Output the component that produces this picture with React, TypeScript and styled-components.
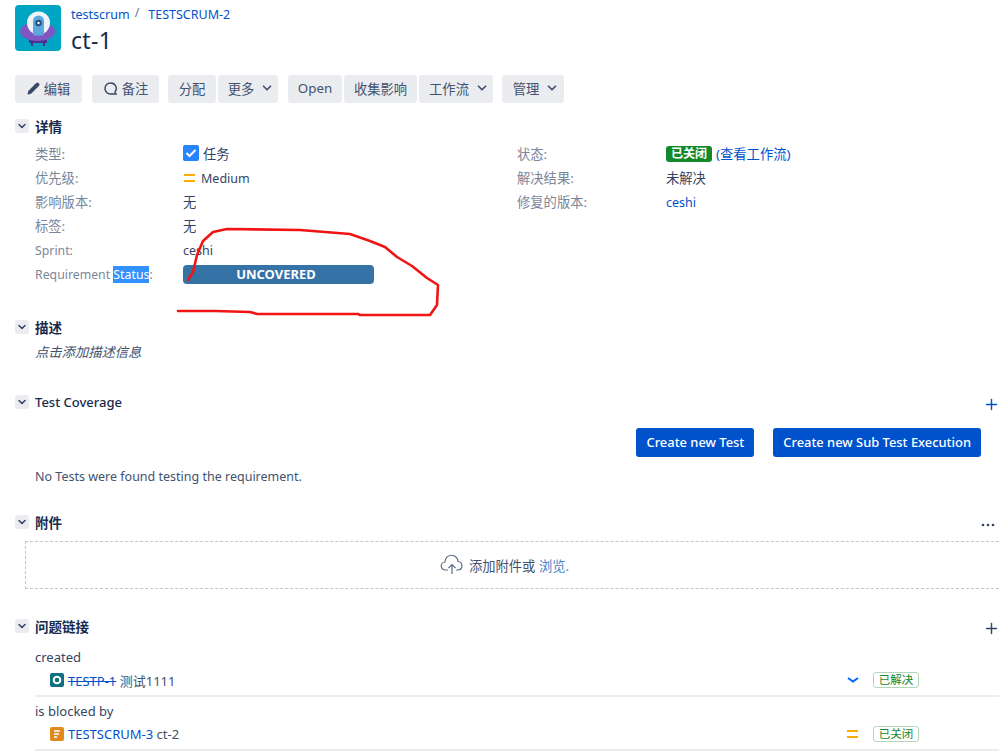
import styled, { createGlobalStyle } from "styled-components";
import { ChevronDown, Pencil, Plus } from "lucide-react";

const GlobalStyle = createGlobalStyle`
  html, body {
    margin: 0;
    padding: 0;
    background: #fff;
  }
  body {
    font-family: "Noto Sans", "Noto Sans CJK SC", sans-serif;
    font-size: 13px;
    color: #172b4d;
    overflow: hidden;
  }
`;

const Page = styled.div`
  position: relative;
  width: 999px;
  height: 755px;
  overflow: hidden;
  padding: 5px 0 0 15px;
  box-sizing: border-box;
`;
const Header = styled.header`
  display: flex;
  gap: 10px;
  height: 46px;
`;
const HeaderText = styled.div`
  display: flex;
  flex-direction: column;
`;
const Breadcrumbs = styled.div`
  display: flex;
  height: 20px;
  line-height: 20px;
  font-size: 12.5px;
  color: #6b778c;
`;
const Crumb = styled.a`
  color: #0052cc;
`;
const Slash = styled.span`
  margin: -2px 9px 0 5px;
`;
const Title = styled.h1`
  margin: 0;
  font-size: 23px;
  line-height: 30px;
  font-weight: 400;
  letter-spacing: 0.3px;
`;
const Toolbar = styled.div`
  display: flex;
  margin-top: 24px;
  height: 28px;
`;
const ToolButton = styled.button<{ $w: number; $after?: number; $caret?: boolean }>`
  display: flex;
  align-items: center;
  justify-content: center;
  gap: 4px;
  width: ${(p) => p.$w}px;
  height: 28px;
  margin-right: ${(p) => p.$after ?? 2}px;
  padding: 0 0 2px ${(p) => (p.$caret ? "6px" : "0")};
  border: 0;
  border-radius: 3px;
  background: #ebecf0;
  color: #42526e;
  font: inherit;
  font-size: 13.3px;
`;
const CaretSlot = styled.span`
  display: flex;
  margin-left: 2px;
`;
const Section = styled.section<{ $top: number }>`
  margin-top: ${(p) => p.$top}px;
`;
const SectionHead = styled.div`
  display: flex;
  align-items: center;
  height: 20px;
  justify-content: space-between;
`;
const HeadLeft = styled.div`
  display: flex;
  align-items: center;
  gap: 6px;
`;
const Toggle = styled.span`
  display: flex;
  align-items: center;
  justify-content: center;
  width: 14px;
  height: 14px;
  border-radius: 3px;
  background: #ebecf0;
  color: #344563;
`;
const SectionTitle = styled.h4<{ $latin?: boolean }>`
  margin: 0;
  font-size: ${(p) => (p.$latin ? "13px" : "13.5px")};
  font-weight: ${(p) => (p.$latin ? 500 : 700)};
  color: #172b4d;
`;
const DetailGrid = styled.div`
  display: grid;
  grid-template-columns: 482px 1fr;
  padding: 5px 0 0 20px;
`;
const DetailRow = styled.div`
  display: flex;
  align-items: center;
  height: 24px;
`;
const Label = styled.span<{ $latin?: boolean; $w?: number }>`
  width: ${(p) => p.$w ?? 148}px;
  flex: none;
  padding-top: ${(p) => (p.$latin ? "2px" : "0")};
  color: #7a869a;
  font-size: ${(p) => (p.$latin ? "12.3px" : "13.3px")};
`;
const Value = styled.span<{ $latin?: boolean }>`
  display: flex;
  align-items: center;
  gap: 4px;
  padding-top: ${(p) => (p.$latin ? "2px" : "0")};
  font-size: ${(p) => (p.$latin ? "12.5px" : "13.3px")};
  color: #344563;
`;
const Selected = styled.span`
  background: #3390ff;
  color: #fff;
`;
const Link = styled.a<{ $struck?: boolean }>`
  color: #0052cc;
  text-decoration: ${(p) => (p.$struck ? "line-through" : "none")};
`;
const StatusLozenge = styled.span`
  display: inline-block;
  margin-top: 2px;
  padding: 0 5px;
  height: 16px;
  line-height: 15px;
  border-radius: 3px;
  background: #14892c;
  color: #fff;
  font-size: 12px;
  font-weight: 700;
`;
const CoverageBar = styled.div`
  width: 191px;
  height: 19px;
  margin-top: 3px;
  padding-right: 5px;
  box-sizing: border-box;
  border-radius: 4px;
  background: #3572a5;
  color: #fff;
  font-size: 13px;
  font-weight: 700;
  line-height: 19px;
  text-align: center;
`;
const Hint = styled.p`
  margin: 5px 0 0 20px;
  font-style: italic;
  font-size: 13.3px;
  color: #42526e;
`;
const ActionRow = styled.div`
  display: flex;
  justify-content: flex-end;
  gap: 19px;
  margin: 16px 18px 0 0;
`;
const PrimaryButton = styled.button`
  height: 29px;
  padding: 0 10px 2px;
  border: 0;
  border-radius: 3px;
  background: #0052cc;
  color: #fff;
  font: inherit;
  font-size: 12.9px;
  font-weight: 500;
`;
const PlainText = styled.p`
  margin: 11px 0 0 20px;
  font-size: 12.5px;
  color: #42526e;
`;
const HeadAction = styled.span<{ $blue?: boolean }>`
  display: flex;
  margin: 4px -1px 0 0;
  color: ${(p) => (p.$blue ? "#0052cc" : "#344563")};
`;
const MoreAction = styled.span`
  display: flex;
  margin: 6px 4px 0 0;
`;
const DropZone = styled.div`
  display: flex;
  align-items: center;
  justify-content: center;
  gap: 5px;
  height: 46px;
  margin: 9px 0 0 10px;
  padding-right: 16px;
  border: 1px dashed #c1c7d0;
  border-right: 0;
  color: #42526e;
  font-size: 13.3px;
`;
const BrowseLink = styled.a`
  color: #4a7fc7;
`;
const LinkList = styled.div`
  padding-top: 7px;
`;
const LinkGroup = styled.div`
  margin-left: 20px;
  padding-top: 5px;
  border-bottom: 2px solid #ebecf0;
  height: 54px;
  box-sizing: border-box;
`;
const LinkGroupTitle = styled.div`
  height: 18px;
  line-height: 18px;
  font-size: 13px;
  color: #344563;
`;
const LinkItem = styled.div`
  display: flex;
  align-items: center;
  height: 22px;
  margin-top: 3px;
  padding-left: 15px;
  font-size: 13px;
  color: #42526e;
  gap: 4px;
`;
const LinkText = styled.span`
  flex: 1;
`;
const PriorityCell = styled.span`
  display: flex;
  justify-content: center;
  width: 16px;
  margin-right: 8px;
`;
const DoneLozenge = styled.span`
  width: 46px;
  height: 16px;
  margin-right: 80px;
  box-sizing: border-box;
  border: 1px solid #b2d8b9;
  border-radius: 3px;
  color: #14892c;
  font-size: 11.5px;
  line-height: 14px;
  text-align: center;
`;
const Annotation = styled.svg`
  position: absolute;
  left: 0;
  top: 0;
  pointer-events: none;
`;

const UfoLogo = () => (
  <svg width="46" height="46" viewBox="0 0 46 46">
    <rect width="46" height="46" rx="4" fill="#00a5c4" />
    <path d="M14 35h18v3h-2v3h-2v-3H18v3h-2v-3h-2z" fill="#4a3191" />
    <ellipse cx="22.500" cy="26.500" rx="17.500" ry="9.500" fill="#7e57c2" />
    <circle cx="23.500" cy="18" r="11.500" fill="#eef4fa" />
    <path d="M18 30V16a5.500 5.500 0 0 1 11 0v14q-5.500 1-11 0z" fill="#5ba7e0" />
    <circle cx="23.500" cy="18" r="3.200" fill="#23507a" />
    <circle cx="23.500" cy="18" r="1.200" fill="#fff" />
  </svg>
);
const Chevron = ({ size = 14 }: { size?: number }) => (
  <ChevronDown size={size} strokeWidth={3} />
);
const CommentIcon = () => (
  <svg width="15" height="15" viewBox="0 0 15 15" fill="none">
    <path d="M12 12.500l1.500 1M7.500 2a5.500 5.500 0 1 0 0 11h5.500l-1-2A5.500 5.500 0 0 0 7.500 2z" stroke="#344563" strokeWidth="1.400" />
  </svg>
);
const TaskIcon = () => (
  <svg width="16" height="16" viewBox="0 0 16 16">
    <rect width="16" height="16" rx="2" fill="#2684ff" />
    <path d="M3.500 8l3 3 6-6" stroke="#fff" strokeWidth="2" fill="none" />
  </svg>
);
const MediumIcon = () => (
  <svg width="14" height="10" viewBox="0 0 14 10">
    <rect x="1" y="1" width="11" height="2" fill="#ffab00" />
    <rect x="1" y="7" width="11" height="2" fill="#ffab00" />
  </svg>
);
const LowIcon = () => (
  <svg width="14" height="8" viewBox="0 0 14 8" fill="none">
    <path d="M2 2l5 3.500L12 2" stroke="#0065ff" strokeWidth="2" />
  </svg>
);
const CloudIcon = () => (
  <svg width="24" height="22" viewBox="0 0 24 22" fill="none" stroke="#5e6c84" strokeWidth="1.200">
    <path d="M8 16H5.500a4 4 0 0 1-.5-8 6.500 6.500 0 0 1 13-.500 4.300 4.300 0 0 1 .5 8.500H16" />
    <path d="M12 20v-9M8.500 14l3.500-3.500 3.500 3.500" />
  </svg>
);
const DotsIcon = () => (
  <svg width="14" height="4" viewBox="0 0 14 4" fill="#344563">
    <circle cx="2" cy="2" r="1.300" />
    <circle cx="7" cy="2" r="1.300" />
    <circle cx="12" cy="2" r="1.300" />
  </svg>
);
const PageIssueIcon = () => (
  <svg width="14" height="14" viewBox="0 0 14 14">
    <rect width="14" height="14" rx="2" fill="#0f6f82" />
    <circle cx="7" cy="7" r="3.300" fill="none" stroke="#fff" strokeWidth="2" />
  </svg>
);
const StoryIcon = () => (
  <svg width="14" height="14" viewBox="0 0 14 14">
    <rect width="14" height="14" rx="2" fill="#e08a1e" />
    <path d="M4 4h6M4 7h5M4 10h3" stroke="#fff" strokeWidth="1.400" />
  </svg>
);

export default function App() {
  return (
    <Page>
      <GlobalStyle />
      <Header>
        <UfoLogo />
        <HeaderText>
          <Breadcrumbs>
            <Crumb>testscrum</Crumb>
            <Slash>/</Slash>
            <Crumb>TESTSCRUM-2</Crumb>
          </Breadcrumbs>
          <Title>ct-1</Title>
        </HeaderText>
      </Header>
      <Toolbar>
        <ToolButton $w={67} $after={10}>
          <Pencil size={13} fill="#344563" />
          编辑
        </ToolButton>
        <ToolButton $w={67} $after={9}>
          <CommentIcon />
          备注
        </ToolButton>
        <ToolButton $w={48}>分配</ToolButton>
        <ToolButton $w={60} $after={10} $caret>
          更多
          <CaretSlot>
            <Chevron />
          </CaretSlot>
        </ToolButton>
        <ToolButton $w={54}>Open</ToolButton>
        <ToolButton $w={73}>收集影响</ToolButton>
        <ToolButton $w={74} $after={9} $caret>
          工作流
          <CaretSlot>
            <Chevron />
          </CaretSlot>
        </ToolButton>
        <ToolButton $w={62} $caret>
          管理
          <CaretSlot>
            <Chevron />
          </CaretSlot>
        </ToolButton>
      </Toolbar>

      <Section $top={13}>
        <SectionHead>
          <HeadLeft>
            <Toggle>
              <Chevron size={12} />
            </Toggle>
            <SectionTitle>详情</SectionTitle>
          </HeadLeft>
        </SectionHead>
        <DetailGrid>
          <div>
            <DetailRow>
              <Label>类型:</Label>
              <Value>
                <TaskIcon />
                任务
              </Value>
            </DetailRow>
            <DetailRow>
              <Label>优先级:</Label>
              <Value $latin>
                <MediumIcon />
                Medium
              </Value>
            </DetailRow>
            <DetailRow>
              <Label>影响版本:</Label>
              <Value>无</Value>
            </DetailRow>
            <DetailRow>
              <Label>标签:</Label>
              <Value>无</Value>
            </DetailRow>
            <DetailRow>
              <Label $latin>Sprint:</Label>
              <Value $latin>ceshi</Value>
            </DetailRow>
            <DetailRow>
              <Label $latin>
                Requirement <Selected>Status</Selected>:
              </Label>
              <CoverageBar>UNCOVERED</CoverageBar>
            </DetailRow>
          </div>
          <div>
            <DetailRow>
              <Label $w={149}>状态:</Label>
              <Value>
                <StatusLozenge>已关闭</StatusLozenge>
                <Link>(查看工作流)</Link>
              </Value>
            </DetailRow>
            <DetailRow>
              <Label $w={149}>解决结果:</Label>
              <Value>未解决</Value>
            </DetailRow>
            <DetailRow>
              <Label $w={149}>修复的版本:</Label>
              <Value $latin>
                <Link>ceshi</Link>
              </Value>
            </DetailRow>
          </div>
        </DetailGrid>
      </Section>

      <Section $top={32}>
        <SectionHead>
          <HeadLeft>
            <Toggle>
              <Chevron size={12} />
            </Toggle>
            <SectionTitle>描述</SectionTitle>
          </HeadLeft>
        </SectionHead>
        <Hint>点击添加描述信息</Hint>
      </Section>

      <Section $top={31}>
        <SectionHead>
          <HeadLeft>
            <Toggle>
              <Chevron size={12} />
            </Toggle>
            <SectionTitle $latin>Test Coverage</SectionTitle>
          </HeadLeft>
          <HeadAction $blue>
            <Plus size={17} strokeWidth={2} />
          </HeadAction>
        </SectionHead>
        <ActionRow>
          <PrimaryButton>Create new Test</PrimaryButton>
          <PrimaryButton>Create new Sub Test Execution</PrimaryButton>
        </ActionRow>
        <PlainText>No Tests were found testing the requirement.</PlainText>
      </Section>

      <Section $top={27}>
        <SectionHead>
          <HeadLeft>
            <Toggle>
              <Chevron size={12} />
            </Toggle>
            <SectionTitle>附件</SectionTitle>
          </HeadLeft>
          <MoreAction>
            <DotsIcon />
          </MoreAction>
        </SectionHead>
        <DropZone>
          <CloudIcon />
          <span>
            添加附件或 <BrowseLink>浏览.</BrowseLink>
          </span>
        </DropZone>
      </Section>

      <Section $top={27}>
        <SectionHead>
          <HeadLeft>
            <Toggle>
              <Chevron size={12} />
            </Toggle>
            <SectionTitle>问题链接</SectionTitle>
          </HeadLeft>
          <HeadAction>
            <Plus size={17} strokeWidth={2} />
          </HeadAction>
        </SectionHead>
        <LinkList>
          <LinkGroup>
            <LinkGroupTitle>created</LinkGroupTitle>
            <LinkItem>
              <PageIssueIcon />
              <LinkText>
                <Link $struck>TESTP-1</Link> 测试1111
              </LinkText>
              <PriorityCell>
                <LowIcon />
              </PriorityCell>
              <DoneLozenge>已解决</DoneLozenge>
            </LinkItem>
          </LinkGroup>
          <LinkGroup>
            <LinkGroupTitle>is blocked by</LinkGroupTitle>
            <LinkItem>
              <StoryIcon />
              <LinkText>
                <Link>TESTSCRUM-3</Link> ct-2
              </LinkText>
              <PriorityCell>
                <MediumIcon />
              </PriorityCell>
              <DoneLozenge>已关闭</DoneLozenge>
            </LinkItem>
          </LinkGroup>
        </LinkList>
      </Section>

      <Annotation width="999" height="755" viewBox="0 0 999 755" fill="none">
        <path
          d="M188 280L193 272 197 255 203 241 213 232 227 229 300 230 350 234 370 241 385 247 397 257 412 266 427 278 438 285 437 305 430 315 360 315 358 314 257 314 250 312 215 311 178 311"
          stroke="#f01414"
          strokeWidth="2.600"
          strokeLinejoin="round"
          strokeLinecap="round"
        />
      </Annotation>
    </Page>
  );
}
